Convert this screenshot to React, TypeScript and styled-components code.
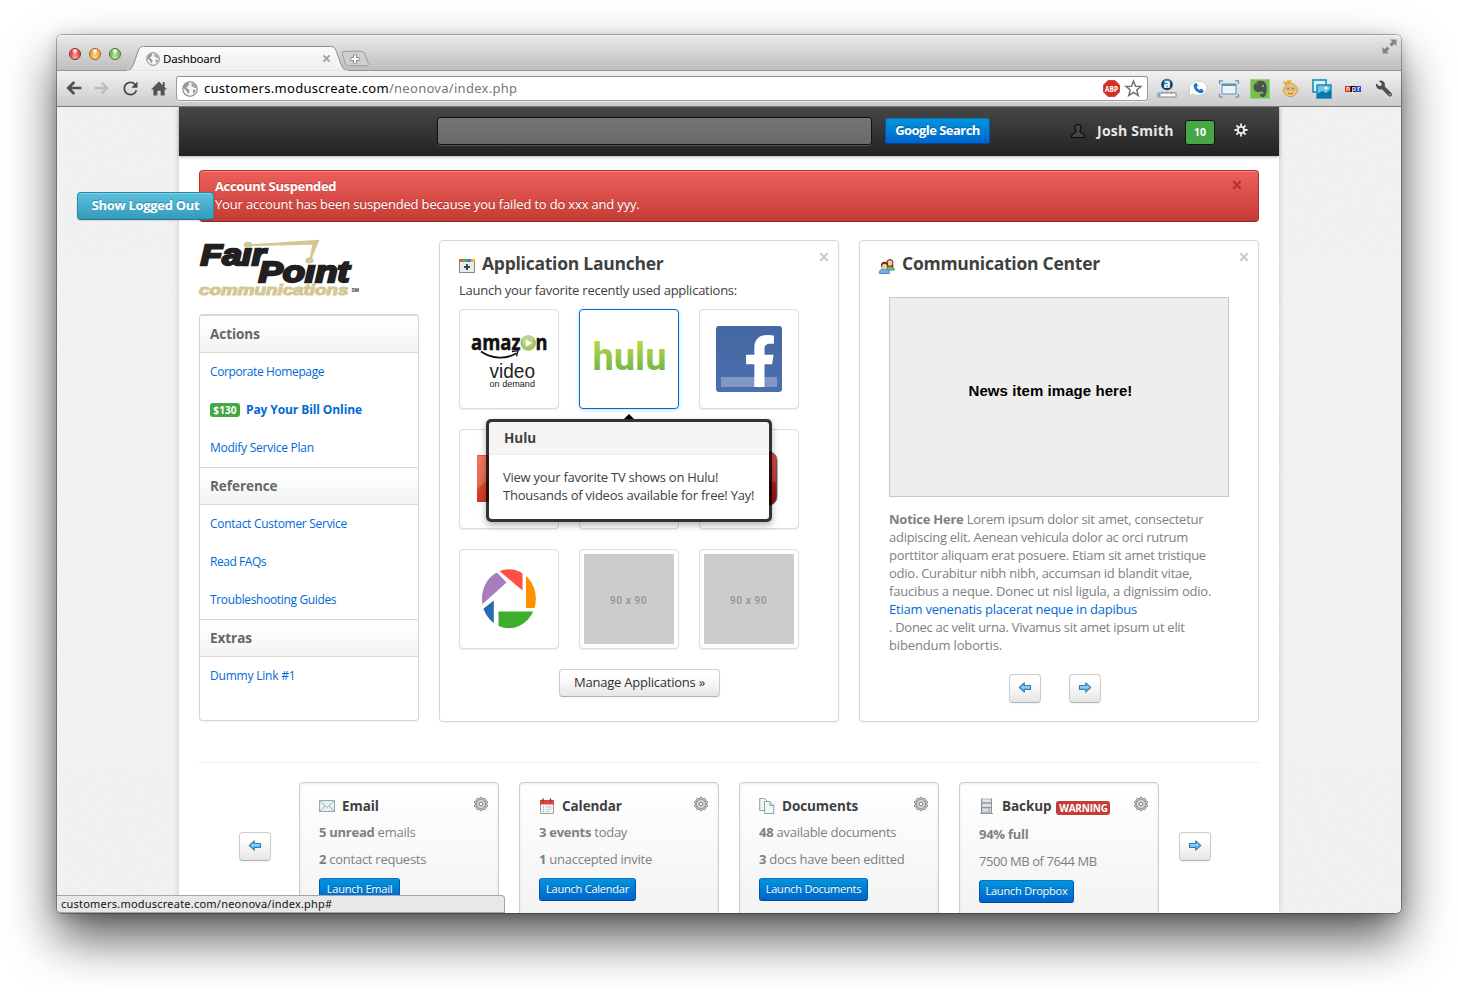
import React from 'react';
import styled, { createGlobalStyle, css } from 'styled-components';
import { FaFacebookF, FaWrench } from 'react-icons/fa';
import { MdRefresh } from 'react-icons/md';

const Global = createGlobalStyle`
  * { box-sizing: border-box; }
  html, body { margin: 0; padding: 0; background: #fff; }
  body {
    width: 1458px; height: 992px; overflow: hidden;
    font-family: 'Open Sans', 'Noto Sans', sans-serif;
    font-size: 13px; line-height: 18px; color: #404040;
  }
  p, h2, h3 { margin: 0; }
  svg { display: block; flex: none; overflow: visible; }
`;

/* ---------- window chrome ---------- */

const Desktop = styled.div`
  width: 1458px; height: 992px; padding: 35px 57px 0; overflow: hidden;
`;
const Window = styled.div`
  position: relative;
  display: flex; flex-direction: column;
  width: 1344px; height: 878px;
  border-radius: 5px;
  background: #efefef;
  box-shadow: 0 0 0 1px rgba(0,0,0,.28), 0 25px 50px rgba(0,0,0,.66), 0 3px 14px rgba(0,0,0,.2);
`;
const TabStrip = styled.div`
  display: flex; height: 36px; flex: none;
  border-radius: 5px 5px 0 0;
  background: linear-gradient(#e9e9e9, #bdbdbd);
  box-shadow: inset 0 1px 0 #f4f4f4, inset 0 -1px 0 #959595;
`;
const Lights = styled.div`
  display: flex; gap: 8px; padding: 13px 0 0 12px; width: 72px;
`;
const Light = styled.span<{ $c: string; $d: string }>`
  width: 12px; height: 12px; border-radius: 50%;
  background: radial-gradient(ellipse at 50% 18%, rgba(255,255,255,.95) 0 8%, rgba(255,255,255,0) 42%),
    radial-gradient(circle at 50% 85%, rgba(255,255,255,.55), rgba(255,255,255,0) 50%), ${p => p.$c};
  border: 1px solid ${p => p.$d};
`;
const Tab = styled.div`
  position: relative; width: 219px; height: 36px;
  display: flex; align-items: center; gap: 3px;
  padding: 11px 0 0 17px;
  font-family: 'Noto Sans', sans-serif; font-size: 11.5px; line-height: 14px; color: #000;
`;
const TabShape = styled.svg` position: absolute; left: 0; top: 0; `;
const TabLabel = styled.span` position: relative; flex: 1; letter-spacing: -.2px; `;
const TabGlyph = styled.span` position: relative; `;
const TabClose = styled.svg` position: relative; margin-right: 17px; `;
const NewTab = styled.svg` margin-left: -3px; `;
const Spacer = styled.div` flex: 1; `;
const Toolbar = styled.div`
  display: flex; align-items: center; height: 36px; flex: none;
  padding: 0 2px 0 9px;
  background: linear-gradient(#f2f2f2, #cbcbcb);
  border-bottom: 1px solid #7b7b7b;
`;
const NavIcons = styled.div`
  display: flex; align-items: center; gap: 12px; width: 110px; height: 30px; padding-bottom: 1px;
`;
const Reload = styled.span` width: 17px; height: 20px; svg { margin-left: -2px; } `;
const Omnibox = styled.div`
  display: flex; align-items: center; width: 972px; height: 25px;
  padding: 0 5px; gap: 5px;
  background: #fff; border: 1px solid #9d9d9d; border-top-color: #8e8e8e; border-radius: 3px;
  box-shadow: 0 1px 0 rgba(255,255,255,.6);
`;
const Url = styled.span`
  flex: 1; padding: 0 0 2px 1px; color: #777; font-family: 'Noto Sans', sans-serif; font-size: 13px; letter-spacing: .29px;
  b { font-weight: 400; color: #000; }
`;
const Extensions = styled.div`
  display: grid; grid-template-columns: repeat(8, 31px); align-items: center; justify-items: center;
  margin-left: 3px; height: 24px;
`;
const StatusBar = styled.div`
  position: absolute; left: 0; bottom: 0; z-index: 5;
  width: 448px; height: 18px; padding: 0 4px;
  background: #e8e8e8; border: 1px solid #a6a6a6; border-left: 0;
  border-radius: 0 4px 0 4px;
  font-family: 'Noto Sans', sans-serif; font-size: 11px; line-height: 16px; color: #111; letter-spacing: .22px;
`;

/* ---------- page shell ---------- */

const Viewport = styled.div`
  position: relative; height: 806px; overflow: hidden;
  display: flex; justify-content: center;
  background: #f5f5f5; border-radius: 0 0 5px 5px;
`;
const Grain = styled.svg` position: absolute; inset: 0; opacity: .13; `;
const Page = styled.div`
  position: relative; width: 1100px; height: 806px; background: #fff;
  box-shadow: 0 0 6px rgba(0,0,0,.18);
`;
const NavBar = styled.div`
  display: flex; align-items: flex-start; height: 49px; padding-left: 258px;
  background: linear-gradient(#474747, #222);
  box-shadow: 0 1px 3px rgba(0,0,0,.3);
`;
const SearchField = styled.div`
  width: 435px; height: 28px; margin-top: 10px;
  background: linear-gradient(#757575, #6a6a6a);
  border: 1px solid #111; border-radius: 3px;
  box-shadow: 0 1px 0 rgba(255,255,255,.2);
`;
const blueFill = css`
  background: linear-gradient(#0095db, #0064cd);
  border: 1px solid #0055b8; border-top-color: #0c74c4; border-bottom-color: #0048a0;
  color: #fff; text-shadow: 0 -1px 0 rgba(0,0,0,.25);
`;
const SearchButton = styled.div`
  ${blueFill}
  width: 105px; height: 26px; margin: 11px 0 0 13px; border-radius: 3px;
  font-weight: 700; font-size: 13px; line-height: 23px; text-align: center; letter-spacing: -.55px;
  white-space: nowrap;
`;
const UserIcon = styled.svg` margin: 16px 0 0 80px; `;
const UserName = styled.div`
  margin: 14px 0 0 11px; width: 88px; white-space: nowrap;
  font-size: 14px; font-weight: 700; line-height: 20px; color: #e8e8e8; letter-spacing: .25px;
`;
const CountBadge = styled.div`
  width: 30px; height: 25px; margin-top: 13px;
  background: #46a546; border: 1px solid #0b1a0b; border-radius: 3px;
  color: #fff; font-weight: 700; font-size: 10.5px; line-height: 23px; text-align: center;
`;
const NavGear = styled.svg` margin: 16px 0 0 19px; `;

const FloatButton = styled.div`
  position: absolute; left: 20px; top: 85px; z-index: 3;
  width: 137px; height: 28px; border-radius: 4px;
  background: linear-gradient(#5bc0de, #339bb9);
  border: 1px solid #2b87a3; border-bottom-color: #22708a;
  box-shadow: inset 0 1px 0 rgba(255,255,255,.25), 0 1px 2px rgba(0,0,0,.1);
  color: #fff; font-weight: 700; font-size: 13px; line-height: 25px; text-align: center; letter-spacing: -.3px;
  text-shadow: 0 -1px 0 rgba(0,0,0,.25); white-space: nowrap;
`;

const Body = styled.div` padding: 14px 20px 0; `;
const Alert = styled.div`
  position: relative; height: 52px; padding: 6px 15px;
  background: linear-gradient(#ee5f5b, #c43c35);
  border: 1px solid #b5332d; border-bottom-color: #882824; border-radius: 4px;
  box-shadow: inset 0 1px 0 rgba(255,255,255,.25);
  color: #fff; font-size: 13px; letter-spacing: -.17px; text-shadow: 0 -1px 0 rgba(0,0,0,.25);
  b { letter-spacing: -.36px; }
`;
const CloseX = styled.span<{ $top: number; $right: number; $dim?: string }>`
  position: absolute; top: ${p => p.$top}px; right: ${p => p.$right}px;
  svg { stroke: ${p => p.$dim || '#c9c9c9'}; }
`;
const Columns = styled.div` display: flex; gap: 20px; margin-top: 18px; `;
const panelBorder = css`
  border: 1px solid #d5d5d5; border-radius: 4px; background: #fff;
  box-shadow: 0 1px 2px rgba(0,0,0,.06);
`;

/* ---------- sidebar ---------- */

const Side = styled.div` width: 220px; `;
const LogoSlot = styled.div` height: 74px; `;
const Menu = styled.div`
  ${panelBorder}
  height: 407px; overflow: hidden; border-top: 2px solid #d8d8d8;
`;
const MenuHead = styled.h3<{ $first?: boolean }>`
  height: ${p => (p.$first ? 37 : 38)}px; padding-left: 10px;
  border-bottom: 1px solid #d9d9d9; border-top: ${p => (p.$first ? 0 : 1)}px solid #d9d9d9;
  background: linear-gradient(#fff, #f2f4f4);
  font-size: 13.5px; font-weight: 700; line-height: 36px; color: #666; letter-spacing: -.05px;
`;
const MenuLink = styled.div<{ $bold?: boolean; $ls?: number }>`
  display: flex; align-items: center; gap: 6px;
  height: 38px; padding-left: 10px; color: #0069d6; white-space: nowrap;
  font-size: 12px; letter-spacing: ${p => p.$ls ?? 0}px;
  font-weight: ${p => (p.$bold ? 700 : 400)};
`;
const Tag = styled.span<{ $c: string; $w: number; $ls?: number }>`
  display: inline-block; width: ${p => p.$w}px; height: 14px; border-radius: 3px;
  background: ${p => p.$c}; color: #fff; text-align: center;
  font-size: 10px; font-weight: 700; line-height: 14px; letter-spacing: ${p => p.$ls ?? -0.2}px;
`;

/* ---------- panels ---------- */

const Panel = styled.div`
  ${panelBorder}
  position: relative; width: 400px; height: 482px; padding: 12px 19px 0;
`;
const PanelTitle = styled.h2`
  display: flex; align-items: center; gap: 7px; height: 20px;
  font-size: 17.5px; font-weight: 700; line-height: 20px; letter-spacing: -.25px; color: #404040;
  white-space: nowrap;
  svg { margin-top: 5px; }
`;
const Lead = styled.p` margin-top: 8px; letter-spacing: -.24px; white-space: nowrap; `;
const Grid = styled.div`
  position: relative; margin-top: 10px;
  display: grid; grid-template-columns: repeat(3, 100px); grid-auto-rows: 100px; gap: 20px;
`;
const Tile = styled.div<{ $on?: boolean }>`
  padding: 4px; border-radius: 4px; background: #fff;
  border: 1px solid ${p => (p.$on ? '#0069d6' : '#ddd')};
  box-shadow: ${p => (p.$on ? '0 1px 4px rgba(0,105,214,.25)' : '0 1px 1px rgba(0,0,0,.075)')};
`;
const Placeholder = styled.div`
  height: 90px; background: #ccc; color: #969696; padding-right: 1px;
  font-family: Roboto, sans-serif; font-size: 10.5px; font-weight: 600; line-height: 93px; text-align: center; letter-spacing: .4px;
`;
const Popover = styled.div`
  position: absolute; left: 27px; top: 110px; z-index: 2; width: 286px; height: 103px;
  padding: 3px; border-radius: 5px; background: rgba(0,0,0,.8);
  box-shadow: 0 3px 7px rgba(0,0,0,.3); white-space: nowrap;
  &::before {
    content: ''; position: absolute; left: 138px; top: -5px;
    border: 5px solid transparent; border-top: 0; border-bottom-color: #000;
  }
`;
const PopTitle = styled.div`
  height: 33px; padding-left: 15px; background: #f5f5f5; border-bottom: 1px solid #eee;
  border-radius: 3px 3px 0 0; font-size: 13.5px; font-weight: 700; line-height: 32px;
`;
const PopBody = styled.div`
  height: 64px; padding: 13px 14px 0; background: #fff; border-radius: 0 0 3px 3px;
`;
const grayFill = css`
  background: linear-gradient(#fff 25%, #e6e6e6);
  border: 1px solid #ccc; border-bottom-color: #b3b3b3; border-radius: 4px;
  box-shadow: 0 1px 2px rgba(0,0,0,.05);
`;
const ManageButton = styled.div`
  ${grayFill}
  width: 161px; height: 28px; margin: 20px 0 0 100px;
  font-size: 13px; letter-spacing: -.23px; line-height: 25px; text-align: center; color: #333; white-space: nowrap;
`;
const News = styled.div`
  width: 340px; height: 200px; margin: 24px 0 0 10px; padding-right: 17px;
  background: #eee; border: 1px solid #c8c8c8;
  font-family: 'Liberation Sans', Arial, sans-serif; font-weight: 700; font-size: 15px; line-height: 185px;
  letter-spacing: .06px; text-align: center; color: #000;
`;
const Notice = styled.p`
  margin: 13px 0 0 10px; color: #808080; white-space: nowrap;
`;
const Line = styled.span<{ $ls: number; $link?: boolean }>`
  display: block; letter-spacing: ${p => p.$ls}px; color: ${p => (p.$link ? '#0069d6' : 'inherit')};
`;
const Pager = styled.div` display: flex; gap: 28px; margin: 20px 0 0 130px; `;
const ArrowButton = styled.div<{ $mt?: number }>`
  ${grayFill}
  width: 32px; height: 29px; padding: 7px 0 0 8px; margin-top: ${p => p.$mt ?? 0}px;
`;

/* ---------- widget carousel ---------- */

const Divider = styled.div` height: 1px; margin-top: 40px; background: #eee; `;
const Carousel = styled.div`
  display: flex; align-items: flex-start; gap: 20px; margin: 19px 0 0 40px;
`;
const CarouselArrow = styled.div<{ $left?: boolean }>` width: ${p => (p.$left ? 40 : 32)}px; `;
const Card = styled.div`
  position: relative; width: 200px; height: 180px; padding: 13px 0 0 19px;
  border: 1px solid #ccc; border-radius: 4px;
  background: linear-gradient(#fff, #f3f3f3 130px);
  box-shadow: inset 0 1px 3px rgba(0,0,0,.07);
  color: #808080; white-space: nowrap;
`;
const CardTitle = styled.h3`
  display: flex; align-items: center; height: 20px; gap: 7px;
  font-size: 13.5px; font-weight: 700; line-height: 20px; color: #404040; letter-spacing: -.08px;
`;
const CardLine = styled.p<{ $mt: number; $tight?: boolean }>`
  margin-top: ${p => p.$mt}px; letter-spacing: ${p => (p.$tight ? -0.42 : -0.26)}px;
`;
const CardGear = styled.svg` position: absolute; right: 10px; top: 14px; `;
const LaunchButton = styled.div<{ $w: number }>`
  ${blueFill}
  width: ${p => p.$w}px; height: 23px; margin-top: 10px; border-radius: 3px;
  font-size: 11px; line-height: 20px; text-align: center; letter-spacing: -.22px;
`;
const Small = styled.span` margin-left: -2px; padding-top: 3px; display: flex; `;

/* ---------- drawings ---------- */

const Globe = ({ s }: { s: number }) => (
  <svg width={s} height={s} viewBox="0 0 16 16">
    <circle cx="8" cy="8" r="7.2" fill="#f6f6f6" stroke="#7f7f7f" strokeWidth="1.1" />
    <path d="M2 4.500L4.500 2 6.500 1.800 7.500 3.300 6.200 4.500 5.800 5.800 4.300 6.300 5 7.500 7 8.500 7.500 10.500 6.500 12.800 5.500 12.500 5 10.500 3 8.500 1.500 7zM9.500 2L12.300 3.300 14.200 6.500 12.500 7.200 11.500 5.800 9.700 5.300zM10.800 8.800L13.300 8.800 13.300 11 11.300 12.800z" fill="#9a9a9a" />
  </svg>
);

const X = () => (
  <svg width="10" height="10" viewBox="0 0 10 10" fill="none" strokeWidth="2"><path d="M1.300 1.300l7.400 7.400M8.700 1.300L1.300 8.700" /></svg>
);

const Arrow = ({ right }: { right?: boolean }) => (
  <svg width="14" height="12" viewBox="0 0 14 12" transform={right ? 'scale(-1 1)' : undefined}>
    <path d="M1.300 5.500L6.300 .8v2.700h6.200v4h-6.200v2.700z" fill="#62bdf3" stroke="#3a7fb0" strokeWidth="1.100" strokeLinejoin="round" />
    <path d="M3.500 5h8.400" stroke="#a8ddfa" strokeWidth="1" />
  </svg>
);

const teeth = (n: number) => Array.from({ length: n }, (_, i) => (i * 360) / n);

const SmallGear = () => (
  <CardGear width="14" height="14" viewBox="0 0 14 14">
    {teeth(10).map(a => (
      <rect key={a} x="5.800" y=".2" width="2.400" height="3.500" rx="1" fill="#ddd" stroke="#707070" strokeWidth=".8" transform={`rotate(${a} 7 7)`} />
    ))}
    <circle cx="7" cy="7" r="4.600" fill="#d2d2d6" stroke="#8a8a8a" strokeWidth=".7" />
    <circle cx="7" cy="7" r="1.800" fill="#fff" stroke="#777" strokeWidth=".9" />
  </CardGear>
);

const FairPoint = () => (
  <svg width="162" height="60" viewBox="0 0 162 60" fontFamily="'Liberation Sans', Arial, sans-serif" fontWeight="700" fontStyle="italic">
    <path d="M49 4.300l71.500-4.500-8 19.500h-2.200l3-14.600L49 6z" fill="#d5c795" />
    <g fill="#231f20" stroke="#231f20" strokeWidth="2.300">
      <text x="1.500" y="25" fontSize="30" textLength="65" lengthAdjust="spacingAndGlyphs">Faır</text>
      <text x="59.500" y="41.500" fontSize="30" textLength="91" lengthAdjust="spacingAndGlyphs">Poınt</text>
    </g>
    <ellipse cx="49" cy="4.800" rx="4.200" ry="3" fill="#d5c795" />
    <ellipse cx="110.500" cy="20.500" rx="4.200" ry="3" fill="#d5c795" />
    <text x="0" y="55.300" fontSize="15" fill="#d5c795" stroke="#d5c795" strokeWidth="1.100" textLength="149.500" lengthAdjust="spacingAndGlyphs">communications</text>
    <text x="152.500" y="51.500" fontSize="5" fontStyle="normal" fill="#333" textLength="7.500" lengthAdjust="spacingAndGlyphs">SM</text>
  </svg>
);

const AmazonLogo = () => (
  <svg width="90" height="90" viewBox="0 0 90 90">
    <g fontFamily="'Open Sans', sans-serif" fontWeight="700" fill="#111" stroke="#111" strokeWidth=".5" fontSize="22">
      <text x="7" y="35.500" textLength="49.500" lengthAdjust="spacingAndGlyphs">amaz</text>
      <text x="71.500" y="35.500" textLength="12" lengthAdjust="spacingAndGlyphs">n</text>
    </g>
    <circle cx="64.300" cy="29" r="7.800" fill="#a3c566" /><circle cx="64" cy="27" r="5.500" fill="#bdd68d" />
    <path d="M61.800 25.300v7.400l6-3.700z" fill="#fff" />
    <path d="M17 37.500c11 7.500 25 8 35.500 1.800" fill="none" stroke="#111" strokeWidth="1.800" />
    <path d="M48 37.500l6-.8-1.500 5.600" fill="none" stroke="#111" strokeWidth="1.300" />
    <g fontFamily="'Liberation Sans', Arial, sans-serif" fill="#222">
      <text x="25.500" y="64.300" fontSize="21" textLength="45.500" lengthAdjust="spacingAndGlyphs">video</text>
      <text x="25.500" y="73" fontSize="8.500" textLength="45.500" lengthAdjust="spacingAndGlyphs">on demand</text>
    </g>
  </svg>
);

const HuluLogo = () => (
  <svg width="90" height="90" viewBox="0 0 90 90">
    <defs>
      <linearGradient id="hulu" x1="0" y1="27" x2="0" y2="57" gradientUnits="userSpaceOnUse">
        <stop offset="0" stopColor="#b5d947" /><stop offset="1" stopColor="#76b548" />
      </linearGradient>
    </defs>
    <text x="8.500" y="56.300" fontFamily="Roboto, sans-serif" fontWeight="700" fontSize="38" fill="url(#hulu)" textLength="74" lengthAdjust="spacingAndGlyphs">hulu</text>
  </svg>
);

const FacebookBox = styled.div`
  position: relative; width: 66px; height: 66px; margin: 12px; border-radius: 3px;
  background: linear-gradient(#4567a3, #4b70ae);
  &::before { content: ''; position: absolute; left: 5px; bottom: 5px; width: 56px; height: 10px; background: #8297c4; }
  svg { position: absolute; left: 18px; top: 9px; }
`;

const Picasa = () => (
  <svg width="90" height="90" viewBox="0 0 90 90">
    <defs><clipPath id="lens"><ellipse cx="44.900" cy="44.700" rx="27" ry="29.500" /></clipPath></defs>
    <g clipPath="url(#lens)">
      <path d="M34 14l24.500 0v22.500L35.500 17z" fill="#ff4d48" />
      <path d="M62 18h14v36H62z" fill="#ff9100" />
      <path d="M34.500 57.500H76v20H34.500z" fill="#3dae2b" />
      <path d="M29.800 46.500v25L15 62l4-7z" fill="#226db4" />
      <path d="M33 18.500L42.500 28.500 18 50.500V18z" fill="#a97cbe" />
    </g>
  </svg>
);

const RedTile = () => (
  <svg width="90" height="90" viewBox="0 0 90 90">
    <defs><linearGradient id="rt" x1="0" y1="0" x2="0" y2="1"><stop offset="0" stopColor="#f0573c" /><stop offset="1" stopColor="#cf3a20" /></linearGradient></defs>
    <path d="M13 21h64v47H13z" fill="url(#rt)" />
    <path d="M13 22h40L13 55z" fill="#fff" opacity=".2" />
  </svg>
);
const DarkRedTile = () => (
  <svg width="90" height="90" viewBox="0 0 90 90">
    <defs><linearGradient id="dr" x1="0" y1="0" x2="0" y2="1"><stop offset="0" stopColor="#e03030" /><stop offset="1" stopColor="#8c0d0d" /></linearGradient></defs>
    <rect x="16" y="17.500" width="57" height="54" rx="9" fill="url(#dr)" stroke="#5d6468" />
    <path d="M52 19h13a7 7 0 0 1 7 7v22H52z" fill="#fff" opacity=".12" />
  </svg>
);

const AppIcon = () => (
  <svg width="16" height="16" viewBox="0 0 16 16">
    <rect x=".5" y="1.500" width="15" height="13" fill="#ececec" stroke="#8a8a8a" />
    <path d="M0 1h4v3H0z" fill="#e4574a" /><path d="M4 1h4v3H4z" fill="#4caf50" /><path d="M8 1h4v3H8z" fill="#3b83e0" /><path d="M12 1h4v3h-4z" fill="#f3b52d" />
    <path d="M8 6v6M5 9h6" stroke="#3f4550" strokeWidth="2" />
  </svg>
);
const PeopleIcon = () => (
  <svg width="16" height="16" viewBox="0 0 16 16">
    <path d="M7.500 12.500c0-3 1.300-4 3.500-4s4.600 1 4.600 3.500z" fill="#5fbf7a" stroke="#2f8a4d" strokeWidth=".6" />
    <path d="M7.500 8.500V3.500C8 0 14 0 14.300 3.700V9h-2z" fill="#8c4a1f" /><ellipse cx="11" cy="5" rx="2.200" ry="2.700" fill="#f4cb9d" />
    <path d="M.3 15.500c0-3.500 1.500-4.500 5-4.500s5.200 1 5.200 4.500z" fill="#78aee8" stroke="#2f67b4" strokeWidth=".7" />
    <circle cx="5.500" cy="7.300" r="3.500" fill="#5a3519" /><ellipse cx="5.500" cy="8.500" rx="2.500" ry="2.800" fill="#f6cfa4" />
  </svg>
);
const MailIcon = () => (
  <svg width="16" height="16" viewBox="0 0 16 16"><path d="M.5 2.500h15v11H.5z" fill="#e4efef" stroke="#93a9a9" /><path d="M1 3l7 6.500L15 3M1 13l5-5M15 13l-5-5" fill="none" stroke="#a0b5b5" /></svg>
);
const CalendarIcon = () => (
  <svg width="16" height="16" viewBox="0 0 16 16"><path d="M1.500 2.500h13v13h-13z" fill="#f8f8f8" stroke="#999" /><path d="M1 2h14v4.500H1z" fill="#d9453b" /><path d="M4 .5v3M11.500 .5v3" stroke="#8a2b24" strokeWidth="1.400" /><path d="M4 9h1M4 11.300h1M4 13.500h1" stroke="#5a92c4" /><path d="M6.500 9h6M6.500 11.300h6M6.500 13.500h4" stroke="#b9c0c4" strokeWidth=".9" /></svg>
);
const DocsIcon = () => (
  <svg width="16" height="16" viewBox="0 0 16 16"><g fill="#eef6f6" stroke="#8ba5a5"><path d="M.7 .5h5l3 3v9h-8z" /><path d="M5.500 3.500h5.500l3.800 3.800v8.200H5.500z" /><path d="M11 3.500v4h4" fill="#cfe0e0" /></g></svg>
);
const ServerIcon = () => (
  <svg width="16" height="16" viewBox="0 0 16 16"><path d="M2 .5h11v15H2z" fill="#b4b7bd" /><path d="M3.500 1.500h8.500v2.700H3.500zM3.500 6h8.500v2.700H3.500zM3.500 10.500h8.500v3H3.500z" fill="#dfe2e8" /><path d="M2.500 .5v15M12.500 .5v15M1 15.500h13M2 5h11M2 9.600h11" stroke="#8b8e94" strokeWidth=".9" /><path d="M9 12h2" stroke="#5c9e5c" /></svg>
);

/* ---------- data ---------- */

type Widget = { title: string; icon: React.ReactNode; a: [string, string]; b: [string, string]; action: string; w: number; warn?: boolean };
const widgets: Widget[] = [
  { title: 'Email', icon: <MailIcon />, a: ['5 unread', ' emails'], b: ['2', ' contact requests'], action: 'Launch Email', w: 81 },
  { title: 'Calendar', icon: <CalendarIcon />, a: ['3 events', ' today'], b: ['1', ' unaccepted invite'], action: 'Launch Calendar', w: 97 },
  { title: 'Documents', icon: <DocsIcon />, a: ['48', ' available documents'], b: ['3', ' docs have been editted'], action: 'Launch Documents', w: 109 },
  { title: 'Backup', icon: <ServerIcon />, a: ['94% full', ''], b: ['', '7500 MB of 7644 MB'], action: 'Launch Dropbox', w: 95, warn: true },
];

const BrowserChrome = () => (
  <>
    <TabStrip>
      <Lights>
        <Light $c="#ee4b4f" $d="#8e2b2b" /><Light $c="#f5a93e" $d="#936222" /><Light $c="#7fc15c" $d="#44762f" />
      </Lights>
      <Tab>
        <TabShape width="219" height="36" viewBox="0 0 219 36">
          <defs><linearGradient id="tab" x1="0" y1="0" x2="0" y2="1"><stop offset="0" stopColor="#fafafa" /><stop offset="1" stopColor="#f0f0f0" /></linearGradient></defs>
          <path d="M-3 35.500c5 0 6-2.500 8-7.500l3.500-10c1.500-4.500 2.500-6.500 6-6.500h187c4 0 5 2 6.500 6.500l3.500 10c2 5 3 7.500 8 7.500" fill="url(#tab)" stroke="#8c8c8c" />
          <path d="M-2 36h221" stroke="#f1f1f1" strokeWidth="1.500" />
        </TabShape>
        <TabGlyph><Globe s={14} /></TabGlyph>
        <TabLabel>Dashboard</TabLabel>
        <TabClose width="9" height="9" viewBox="0 0 10 10"><path d="M1.500 1.500l7 7M8.500 1.500l-7 7" stroke="#a2a2a2" strokeWidth="2.200" /></TabClose>
      </Tab>
      <NewTab width="30" height="36" viewBox="0 0 30 36">
        <path d="M-2.500 19.500c-1-2.500-.5-3.200 1.500-3.200H15.500c2.500 0 3.500 .8 4.500 3l3 8.200c.8 2.200 .3 3.300-2 3.300H4.500c-2.500 0-3.500-.8-4.500-3z" fill="#cfcfcf" stroke="#9c9c9c" />
        <path d="M10 19.500v9M5.500 24h9" stroke="#8d8d8d" strokeWidth="4" /><path d="M10 20.300v7.400M6.300 24h7.400" stroke="#fff" strokeWidth="2" />
      </NewTab>
      <Spacer />
      <svg width="19" height="36" viewBox="0 0 19 36" fill="#858585">
        <path d="M8 4.500h6.500v6.500l-2.100-2.100-2.600 2.600-2.300-2.300 2.600-2.600z" />
        <path d="M.5 12v6.500H7l-2.100-2.100 2.600-2.600-2.300-2.300-2.600 2.600z" />
      </svg>
    </TabStrip>
    <Toolbar>
      <NavIcons>
        <svg width="16" height="16" viewBox="0 0 16 16" fill="none" stroke="#505050" strokeWidth="2.700"><path d="M15.500 8H3M8.300 2L2.300 8l6 6" /></svg>
        <svg width="16" height="16" viewBox="0 0 16 16" fill="none" stroke="#bcbcbc" strokeWidth="2.300"><path d="M.5 8H13M7.700 2.500L13.200 8l-5.500 5.500" /></svg>
        <Reload><MdRefresh size={21} color="#484848" /></Reload>
        <svg width="16" height="17" viewBox="0 0 17 17" fill="#555"><path d="M8.500 1L0 9.500h2.500V16h4.300v-5h3.400v5h4.300V9.500H17l-2.500-2.500V1.500h-2V5z" /></svg>
      </NavIcons>
      <Omnibox>
        <Globe s={16} />
        <Url><b>customers.moduscreate.com</b>/neonova/index.php</Url>
        <svg width="17" height="17" viewBox="0 0 17 17"><path d="M5 .5h7L16.500 5v7L12 16.500H5L.5 12V5z" fill="#d4301f" stroke="#a32015" strokeWidth=".6" /><text x="2" y="11.800" fontFamily="'Open Sans', sans-serif" fontWeight="700" fontSize="9" textLength="13" lengthAdjust="spacingAndGlyphs" fill="#fff">ABP</text></svg>
        <svg width="17" height="17" viewBox="0 0 17 17"><path d="M8.500 1l2 5.300 5.600.2-4.400 3.500 1.600 5.500-4.800-3.200-4.800 3.200 1.600-5.500L.9 6.500l5.600-.2z" fill="#fff" stroke="#6e6e6e" strokeWidth="1.400" /></svg>
      </Omnibox>
      <Extensions>
        <svg width="20" height="20" viewBox="0 0 20 20"><circle cx="10" cy="5.500" r="5.800" fill="#123c6b" /><circle cx="10" cy="3.500" r="3.500" fill="#3d86b8" /><text x="6.600" y="9" fontFamily="'Open Sans', sans-serif" fontWeight="700" fontSize="11.500" fill="#fff">a</text><path d="M1 14h18v4H1z" fill="#fff" stroke="#7d8791" /><path d="M1.500 14.500h2v3h-2z" fill="#5c9bf0" /><path d="M5.500 12.500v2M10 12.500v2M14.500 12.500v2" stroke="#7d8791" /></svg>
        <svg width="20" height="18" viewBox="0 0 20 18"><path d="M10 1c5 0 9 3 9 7s-4 7.200-9 7.200c-2 0-3.500-.3-5-1.200L1.500 16V9C.8 4.500 5 1 10 1z" fill="#fff" stroke="#c4c4c4" strokeWidth=".8" /><path d="M5.800 4.200l2.500-1.500 1.700 3-1.400 1.300c.7 1.500 1.800 2.400 3.200 2.800l1.500-1.200 2.700 2.400-1.800 2c-5 .8-9.300-4-8.400-8.800z" fill="#1b74d8" /></svg>
        <svg width="20" height="18" viewBox="0 0 20 18" fill="none" stroke="#5a93b8"><path d="M.5 4V.8H4M16 .8h3.500V4M.5 14v3H4M16 17h3.500v-3" strokeWidth="1.200" /><rect x="3" y="4" width="14" height="10" fill="#eef3f5" /><path d="M3 5h14" strokeWidth="2" /></svg>
        <svg width="20" height="20" viewBox="0 0 20 20"><rect x=".5" y=".5" width="19" height="19" fill="#77bf52" stroke="#9ad27c" /><path d="M8 2c5-1.200 8 .8 8.500 5 .5 4 0 7.500-1.500 10-1 1.500-5 1.500-5-1 0-1.800 2-2 2.500-1h1c.3-1.500-1-2-1.500-3-1 1.500-6 1.800-7.500-1C3.500 9 3.300 7.500 4 6z" fill="#4a524c" /><path d="M3.500 5.500L7.500 2v3.500z" fill="#697068" /><circle cx="13" cy="7" r=".9" fill="#a4ca95" /></svg>
        <svg width="19" height="19" viewBox="0 0 19 19"><circle cx="9.500" cy="11" r="6.800" fill="#f2c575" stroke="#b98548" strokeWidth=".7" /><circle cx="2.600" cy="11" r="1.600" fill="#e9b467" /><circle cx="16.500" cy="11" r="1.600" fill="#e9b467" /><path d="M8 5L2 1.500l1.500 4zM8 5l3-4-6 1z" fill="#f0a51f" /><circle cx="7" cy="9.700" r="1.700" fill="#fff" stroke="#8c6b3f" strokeWidth=".6" /><circle cx="12" cy="9.700" r="1.700" fill="#fff" stroke="#8c6b3f" strokeWidth=".6" /><circle cx="7" cy="9.700" r=".8" fill="#444" /><circle cx="12" cy="9.700" r=".8" fill="#444" /><path d="M7 14c1.800 1.200 3.500 1.200 5 0" fill="none" stroke="#9d5f2c" /></svg>
        <svg width="20" height="20" viewBox="0 0 20 20"><rect x="1" y="1" width="13" height="12" fill="#dff1f8" stroke="#1192bd" strokeWidth="1.600" /><rect x="5" y="6" width="14" height="13" fill="#6cc7e8" stroke="#0c85b0" strokeWidth="1.400" /><path d="M5 15l5-3 4 2 5-4v9H5z" fill="#0878a8" /><circle cx="14" cy="9" r="1.500" fill="#fff" /></svg>
        <svg width="16" height="8" viewBox="0 0 16 8"><path d="M0 1h5.300v6H0z" fill="#d8251b" /><path d="M5.300 1h5.300v6H5.300z" fill="#000" /><path d="M10.600 1H16v6h-5.400z" fill="#2a45d8" /><text x=".9" y="5.800" fontFamily="'Liberation Sans', sans-serif" fontWeight="700" fontSize="6.500" fill="#fff" textLength="14" >npr</text></svg>
        <svg width="18" height="18" viewBox="0 0 18 18"><g transform="matrix(-1 0 0 1 17 .5)"><FaWrench size={16} color="#505050" /></g></svg>
      </Extensions>
    </Toolbar>
  </>
);

const Nav = () => (
  <NavBar>
    <SearchField />
    <SearchButton>Google Search</SearchButton>
    <UserIcon width="16" height="17" viewBox="0 0 16 17"><path d="M8 1.500c2.300 0 3.300 1.600 3 3.800-.2 1.500-1 2.300-1 3.500 0 1 4.500 1.700 4.500 4.200v1.500h-13V13c0-2.500 4.500-3.200 4.500-4.200 0-1.200-.8-2-1-3.500-.3-2.200.7-3.800 3-3.800z" fill="#454545" stroke="#0a0a0a" strokeWidth="1.200" /></UserIcon>
    <UserName>Josh Smith</UserName>
    <CountBadge>10</CountBadge>
    <NavGear width="14" height="14" viewBox="0 0 14 14">
      {teeth(8).map(a => <path key={a} d="M7 .5V4" stroke="#ececec" strokeWidth="1.800" transform={`rotate(${a} 7 7)`} />)}
      <circle cx="7" cy="7" r="3.100" fill="#333" stroke="#ececec" strokeWidth="1.700" />
    </NavGear>
  </NavBar>
);

const Sidebar = () => (
  <Side>
    <LogoSlot><FairPoint /></LogoSlot>
    <Menu>
      <MenuHead $first>Actions</MenuHead>
      <MenuLink $ls={-0.39}>Corporate Homepage</MenuLink>
      <MenuLink $bold $ls={-0.1}><Tag $c="#46a546" $w={30} $ls={0.1}>$130</Tag>Pay Your Bill Online</MenuLink>
      <MenuLink $ls={-0.26}>Modify Service Plan</MenuLink>
      <MenuHead>Reference</MenuHead>
      <MenuLink $ls={-0.29}>Contact Customer Service</MenuLink>
      <MenuLink $ls={-0.45}>Read FAQs</MenuLink>
      <MenuLink $ls={-0.35}>Troubleshooting Guides</MenuLink>
      <MenuHead>Extras</MenuHead>
      <MenuLink $ls={-0.2}>Dummy Link #1</MenuLink>
    </Menu>
  </Side>
);

const Launcher = () => (
  <Panel>
    <CloseX $top={11} $right={9}><X /></CloseX>
    <PanelTitle><AppIcon />Application Launcher</PanelTitle>
    <Lead>Launch your favorite recently used applications:</Lead>
    <Grid>
      <Tile><AmazonLogo /></Tile>
      <Tile $on><HuluLogo /></Tile>
      <Tile><FacebookBox><FaFacebookF size={52} color="#fff" /></FacebookBox></Tile>
      <Tile><RedTile /></Tile>
      <Tile />
      <Tile><DarkRedTile /></Tile>
      <Tile><Picasa /></Tile>
      <Tile><Placeholder>90 x 90</Placeholder></Tile>
      <Tile><Placeholder>90 x 90</Placeholder></Tile>
      <Popover>
        <PopTitle>Hulu</PopTitle>
        <PopBody>
          <Line $ls={-0.24}>View your favorite TV shows on Hulu!</Line>
          <Line $ls={-0.22}>Thousands of videos available for free! Yay!</Line>
        </PopBody>
      </Popover>
    </Grid>
    <ManageButton>Manage Applications »</ManageButton>
  </Panel>
);

const Communication = () => (
  <Panel>
    <CloseX $top={11} $right={9}><X /></CloseX>
    <PanelTitle><PeopleIcon />Communication Center</PanelTitle>
    <News>News item image here!</News>
    <Notice>
      <Line $ls={-0.24}><b>Notice Here</b> Lorem ipsum dolor sit amet, consectetur</Line>
      <Line $ls={-0.27}>adipiscing elit. Aenean vehicula dolor ac orci rutrum</Line>
      <Line $ls={-0.27}>porttitor aliquam erat posuere. Etiam sit amet tristique</Line>
      <Line $ls={-0.25}>odio. Curabitur nibh nibh, accumsan id blandit vitae,</Line>
      <Line $ls={-0.19}>faucibus a neque. Donec ut nisl ligula, a dignissim odio.</Line>
      <Line $ls={-0.22} $link>Etiam venenatis placerat neque in dapibus</Line>
      <Line $ls={-0.29}>. Donec ac velit urna. Vivamus sit amet ipsum ut elit</Line>
      <Line $ls={-0.14}>bibendum lobortis.</Line>
    </Notice>
    <Pager>
      <ArrowButton><Arrow /></ArrowButton>
      <ArrowButton><Arrow right /></ArrowButton>
    </Pager>
  </Panel>
);

const WidgetCard = ({ w }: { w: Widget }) => (
  <Card>
    <SmallGear />
    <CardTitle>{w.icon}{w.title}{w.warn && <Small><Tag $c="#c43c35" $w={54}>WARNING</Tag></Small>}</CardTitle>
    <CardLine $mt={w.warn ? 9 : 7}><b>{w.a[0]}</b>{w.a[1]}</CardLine>
    <CardLine $mt={9} $tight={w.warn}><b>{w.b[0]}</b>{w.b[1]}</CardLine>
    <LaunchButton $w={w.w}>{w.action}</LaunchButton>
  </Card>
);

export default function App() {
  return (
    <Desktop>
      <Global />
      <Window>
        <BrowserChrome />
        <Viewport>
          <Grain width="1344" height="806">
            <filter id="grain"><feTurbulence type="fractalNoise" baseFrequency=".6" numOctaves="2" /><feColorMatrix type="saturate" values="0" /></filter>
            <rect width="1344" height="806" filter="url(#grain)" />
          </Grain>
          <Page>
            <Nav />
            <Body>
              <Alert>
                <CloseX $top={9} $right={16} $dim="#a33"><X /></CloseX>
                <b>Account Suspended</b><br />Your account has been suspended because you failed to do xxx and yyy.
              </Alert>
              <Columns><Sidebar /><Launcher /><Communication /></Columns>
              <Divider />
              <Carousel>
                <CarouselArrow $left><ArrowButton $mt={50}><Arrow /></ArrowButton></CarouselArrow>
                {widgets.map(w => <WidgetCard key={w.title} w={w} />)}
                <CarouselArrow><ArrowButton $mt={50}><Arrow right /></ArrowButton></CarouselArrow>
              </Carousel>
            </Body>
          </Page>
          <FloatButton>Show Logged Out</FloatButton>
        </Viewport>
        <StatusBar>customers.moduscreate.com/neonova/index.php#</StatusBar>
      </Window>
    </Desktop>
  );
}
